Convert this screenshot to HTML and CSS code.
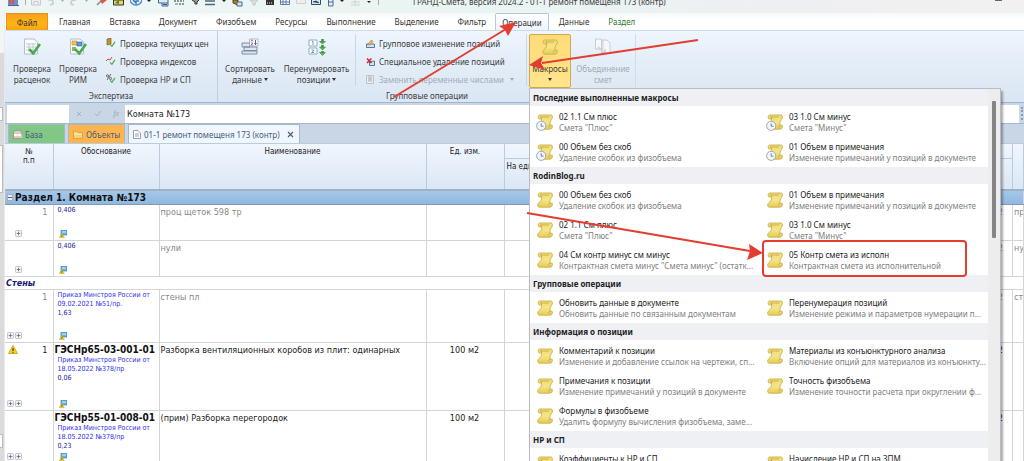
FILE: index.html
```html
<!DOCTYPE html>
<html lang="ru">
<head>
<meta charset="utf-8">
<title>ГРАНД-Смета, версия 2024.2 - 01-1 ремонт помещеня 173 (контр)</title>
<link rel="stylesheet" href="styles.css">
</head>
<body>
<svg class="defs" aria-hidden="true">
  <defs>
    <linearGradient id="gold" x1="0" y1="0" x2="0" y2="1"><stop offset="0" stop-color="#f0db74"/><stop offset=".5" stop-color="#f5e588"/><stop offset="1" stop-color="#e6cb55"/></linearGradient>
    <symbol id="scroll" viewBox="0 0 16 16">
      <path d="M2.300 1H14C15.800 1 15.800 4 14.500 5.500C13 7.500 12.600 9 13.200 11.300H15.200C15.800 13.500 14.700 15.200 12.700 15.200H2.500C.2 15.200 .2 11.800 1.600 11C4 9 5 7.500 4.600 5H2C.8 4 .8 1.500 2.300 1Z" fill="url(#gold)" stroke="#cbb04a" stroke-width=".9"/>
      <path d="M4.600 5C4.800 3.500 4.300 3 3.300 3H12M13.200 11.300C11.300 11.300 11 13.300 12.500 13.600" fill="none" stroke="#c2a440" stroke-width=".8"/>
    </symbol>
    <symbol id="scrollclock" viewBox="0 0 17 17">
      <use href="#scroll" x="1" y="0" width="16" height="16"/>
      <circle cx="5.200" cy="11.800" r="4.600" fill="#f2f6fa" stroke="#9aa8b8"/>
      <path d="M5.200 9.300V12.200H7.500" fill="none" stroke="#66788c" stroke-width=".9"/>
    </symbol>
    <symbol id="check" viewBox="0 0 10 10"><path d="M1 5.500L4 8.800L9.200 1.500" fill="none" stroke="#45ab4c" stroke-width="2"/></symbol>
    <symbol id="plus" viewBox="0 0 7 7"><rect x=".5" y=".5" width="6" height="6" rx=".8" fill="#f1f3f6" stroke="#b4bac4" stroke-width=".8"/><path d="M1.700 3.500H5.300M3.500 1.700V5.300" stroke="#667" stroke-width=".8"/></symbol>
    <symbol id="rowinfo" viewBox="0 0 8 8"><rect x="2" y=".5" width="6" height="4.500" fill="#69b5e6" stroke="#34719f" stroke-width=".6"/><path d="M3 2H7" stroke="#c9ecff"/><path d="M.2 7.700L2.800 3.300L5.400 7.700Z" fill="#f7dc2d" stroke="#a88d10" stroke-width=".4"/><path d="M2.800 4.800V7" stroke="#333" stroke-width=".7"/></symbol>
  </defs>
</svg>

<div class="desktop">
  <aside class="edge"><span class="e1"></span><span class="e2"></span><span class="e3"></span></aside>
  <div class="app">
    <header class="titlebar">
      <div class="quick">
        <svg width="11" height="6"><path d="M0 0H10V5H0Z" fill="#6e8fd0"/><path d="M2 0V4M5 0V4" stroke="#d9534a" stroke-width="2"/><path d="M0 5.500H11" stroke="#41639e"/></svg>
        <i class="bar"></i>
        <svg width="10" height="6"><path d="M.5 0V5H9.500V0M3 5V1.500H7V5" fill="#eee" stroke="#c9c9c9"/></svg>
        <svg width="18" height="6"><path d="M1 0Q7-1 6 4L3 5" fill="none" stroke="#c5c9cd" stroke-width="1.500"/><path d="M14 0h3l-1.500 2z" fill="#aaa"/></svg>
        <svg width="20" height="6"><path d="M6 0Q0 0 1 4L4 5" fill="none" stroke="#c5c9cd" stroke-width="1.500"/><path d="M15 0h3l-1.500 2z" fill="#aaa"/></svg>
        <svg width="12" height="6"><path d="M1 5L5 1" stroke="#888" stroke-width="1.500"/><path d="M4 0H11L6 4Z" fill="#dc5745"/></svg>
        <svg width="11" height="6"><path d="M.5 0V5H10.500V0Z" fill="#f5cf58" stroke="#333"/><path d="M2 3L6 0V4Z" fill="#348a4c"/></svg>
        <svg width="12" height="7"><path d="M0-1A6 6 0 0 0 12-1" fill="#e4f0fb" stroke="#4a88ca" stroke-width="1.300"/><path d="M3 0L6 3V1H9" fill="none" stroke="#3979c1" stroke-width="1.500"/></svg>
        <svg width="5" height="6"><path d="M0 0h4l-2 2z" fill="#222"/></svg>
        <svg width="11" height="7"><path d="M.5 0V3H10V0M4 3V6H10V3" fill="#dbe8f6" stroke="#46678d"/><path d="M5 4.500H9" stroke="#2557a1"/></svg>
        <svg width="11" height="6"><path d="M0 1H10M5 4H10" stroke="#333" stroke-dasharray="2 1"/><path d="M1 4H4" stroke="#357bc0"/></svg>
        <svg width="9" height="6"><path d="M1 0L4 2V4H6V2L8 0" fill="#999" stroke="#333"/></svg>
        <svg width="11" height="6"><path d="M0 1H10M0 4.500H10" stroke="#50657d" stroke-width="1.500"/></svg>
        <svg width="5" height="6"><path d="M0 0h4l-2 2z" fill="#222"/></svg>
        <svg width="11" height="7"><path d="M1 0H6V5L1 3Z" fill="#a7802c" stroke="#54451f"/><path d="M5 2H10V6H5Z" fill="#d9e8f5" stroke="#45648a"/></svg>
        <svg width="11" height="6"><path d="M1 0H9L6 3V5H4V3Z" fill="#e0e2e4" stroke="#c0c3c7"/></svg>
        <svg width="9" height="6"><path d="M0 0H8V5H0Z" fill="#333"/><path d="M1 3H7" stroke="#eee" stroke-dasharray="1 1"/></svg>
        <svg width="10" height="6"><path d="M.5 0V4.500H9.500V0M3 0V4M6 0V4M1 2H9" fill="#f5fbff" stroke="#5c7ba2"/></svg>
        <svg width="10" height="6"><path d="M.5 0V3.500H9.500V0" fill="#eee" stroke="#cbd0d4"/></svg>
        <svg width="11" height="6"><path d="M.5 0V4.500H9.500V0" fill="#d8e6f5" stroke="#314b73"/><path d="M2 2L5 1L8 3" stroke="#314b73"/></svg>
        <svg width="7" height="7"><path d="M.5 0V6H5V0M1 2H5" fill="#e4eefa" stroke="#4b6c9b"/></svg>
        <svg width="5" height="6"><path d="M0 0h4l-2 2z" fill="#222"/></svg>
        <svg width="11" height="6"><path d="M0 2H9M0 5H9M4 0V5" fill="none" stroke="#cbd0d4"/></svg>
        <svg width="5" height="6"><path d="M0 1h4l-2 2z" fill="#222"/></svg>
        <i class="bar"></i>
      </div>
      <span class="caption">ГРАНД-Смета, версия 2024.2 - 01-1 ремонт помещеня 173 (контр)</span>
      <span class="min"></span>
    </header>

    <nav class="tabs">
      <button class="file">Файл</button>
      <button>Главная</button><button>Вставка</button><button>Документ</button><button>Физобъем</button><button>Ресурсы</button><button>Выполнение</button><button>Выделение</button><button>Фильтр</button><button class="on">Операции</button><button>Данные</button><button class="ctx">Раздел</button>
    </nav>

    <section class="ribbon">
      <div class="group g1">
        <div class="tools">
          <button class="big"><svg width="18" height="18" viewBox="0 0 18 18"><path d="M1.500 1H11L14.500 4V16H1.500Z" fill="#fafcff" stroke="#b6bec8"/><path d="M3 6H13M3 9H13M3 12H13M6 5V14M10 5V14" stroke="#c3cad3"/><use href="#check" x="5" y="4" width="13" height="13"/></svg>Проверка<br>расценок</button>
          <button class="big"><svg width="18" height="18" viewBox="0 0 18 18"><path d="M1.500 1H11L14.500 4V16H1.500Z" fill="#fafcff" stroke="#b6bec8"/><path d="M3 3H8V7H3Z" fill="#f2c848" stroke="#b58d20" stroke-width=".6"/><path d="M8 4H13V8H8Z" fill="#5c9bdd" stroke="#2c63a4" stroke-width=".6"/><path d="M3 9H7V13H3Z" fill="#84bd55"/><use href="#check" x="5" y="4" width="13" height="13"/></svg>Проверка<br>РИМ</button>
          <div class="stack">
            <button class="small"><svg width="10" height="10"><path d="M1 1L5 0V6L1 7Z" fill="#c5952b" stroke="#6d4d12" stroke-width=".6"/><use href="#check" x="3" y="3" width="7" height="6"/></svg>Проверка текущих цен</button>
            <button class="small"><svg width="10" height="10"><path d="M0 5L2 3L4 4L6 1" fill="none" stroke="#cc4540"/><use href="#check" x="3" y="3" width="7" height="6"/></svg>Проверка индексов</button>
            <button class="small"><svg width="10" height="10"><circle cx="1.500" cy="1.800" r="1.100" fill="none" stroke="#333" stroke-width=".7"/><circle cx="4.500" cy="4.500" r="1.100" fill="none" stroke="#333" stroke-width=".7"/><path d="M1 6L5 0" stroke="#333" stroke-width=".7"/><use href="#check" x="3" y="3" width="7" height="6"/></svg>Проверка НР и СП</button>
          </div>
        </div>
        <span class="glabel">Экспертиза</span>
      </div>
      <div class="group g2">
        <div class="tools">
          <button class="big sort"><svg width="18" height="18" viewBox="0 0 18 18"><path d="M1 5H9V9H1ZM1 13H16V16H1ZM3 9H16V12.500H3Z" fill="#dbe6f3" stroke="#76859a" stroke-width=".9"/><path d="M8.500 1H17V8H8.500Z" fill="#fff" stroke="#94a0b0" stroke-width=".7"/><path d="M10 3.500L11 1.700L12 3.500M10 5H12L10 7H12" fill="none" stroke="#bb3333" stroke-width=".7"/><path d="M14.500 2V6.500M13.300 5.300L14.500 6.700L15.700 5.300" fill="none" stroke="#2559aa" stroke-width=".9"/></svg>Сортировать<br>данные<b class="dd"></b></button>
          <button class="big"><svg width="18" height="18" viewBox="0 0 18 18"><path d="M1 2H9V8H1ZM1 10H9V16H1Z" fill="#fff" stroke="#8fb0be"/><path d="M4 3.500H5V7M3.500 12H5.500V13L3.500 14.500H6" fill="none" stroke="#398c94" stroke-width=".8"/><path d="M14.500 1V5M14.500 7V11M14.500 13V16" stroke="#3a9641" stroke-width="2.500"/><path d="M11.500 3.500H17.500L14.500 6ZM11.500 9H17.500L14.500 12ZM11.500 14.500H17.500L14.500 17.500Z" fill="#60b84f" stroke="#2c7732" stroke-width=".5"/></svg>Перенумеровать<br>позиции<b class="dd"></b></button>
          <i class="sep"></i>
          <div class="stack wide">
            <button class="small"><svg width="9" height="9"><path d="M.5 5V8.500H8.500V5Z" fill="#d3e2f5" stroke="#5577a6"/><path d="M1.500 5.500L5.500 1L7 2.500L3.500 6Z" fill="#f3c645" stroke="#8d6c24" stroke-width=".6"/></svg>Групповое изменение позиций</button>
            <button class="small"><svg width="9" height="9"><path d="M3.500 5V8.500H8.500V4Z" fill="#d3e2f5" stroke="#5577a6"/><path d="M1 1.500L5.500 6M5.500 1.500L1 6" stroke="#cf2830" stroke-width="1.600"/></svg>Специальное удаление позиций</button>
            <button class="small" disabled><svg width="9" height="9"><path d="M.5 .5H7.500V8.500H.5Z" fill="#eee" stroke="#bbc1c8"/><path d="M2 3H6M2 5H6M3 1V7M5 1V7" stroke="#b6bcc3"/></svg>Заменить переменные числами<b class="dd far"></b></button>
          </div>
          <i class="sep"></i>
          <div class="macro">
            <button class="big open" aria-expanded="true"><svg width="18" height="18"><use href="#scroll" x="1" y="1" width="16" height="16"/></svg>Макросы<br><b class="dd mid"></b></button>
            <div class="popup" role="menu">
              <div class="lists">
                <h3>Последние выполненные макросы</h3>
                <div class="items recent">
                  <button><svg><use href="#scrollclock"/></svg><span>02 1.1 См плюс<small>Смета "Плюс"</small></span></button>
                  <button><svg><use href="#scrollclock"/></svg><span>03 1.0 См минус<small>Смета "Минус"</small></span></button>
                  <button><svg><use href="#scrollclock"/></svg><span>00 Объем без скоб<small>Удаление скобок из физобъема</small></span></button>
                  <button><svg><use href="#scrollclock"/></svg><span>01 Объем в примечания<small>Изменение примечаний у позиций в документе</small></span></button>
                </div>
                <h3>RodinBlog.ru</h3>
                <div class="items">
                  <button><svg><use href="#scroll"/></svg><span>00 Объем без скоб<small>Удаление скобок из физобъема</small></span></button>
                  <button><svg><use href="#scroll"/></svg><span>01 Объем в примечания<small>Изменение примечаний у позиций в документе</small></span></button>
                  <button><svg><use href="#scroll"/></svg><span>02 1.1 См плюс<small>Смета "Плюс"</small></span></button>
                  <button><svg><use href="#scroll"/></svg><span>03 1.0 См минус<small>Смета "Минус"</small></span></button>
                  <button><svg><use href="#scroll"/></svg><span>04 См контр минус см минус<small>Контрактная смета минус "Смета минус" (остатк...</small></span></button>
                  <button><svg><use href="#scroll"/></svg><span>05 Контр смета из исполн<small>Контрактная смета из исполнительной</small></span></button>
                </div>
                <h3>Групповые операции</h3>
                <div class="items">
                  <button><svg><use href="#scroll"/></svg><span>Обновить данные в документе<small>Обновить данные по связанным документам</small></span></button>
                  <button><svg><use href="#scroll"/></svg><span>Перенумерация позиций<small>Изменение режима и параметров нумерации п...</small></span></button>
                </div>
                <h3>Информация о позиции</h3>
                <div class="items">
                  <button><svg><use href="#scroll"/></svg><span>Комментарий к позиции<small>Изменение и добавление ссылок на чертежи, сп...</small></span></button>
                  <button><svg><use href="#scroll"/></svg><span>Материалы из конъюнктурного анализа<small>Включение опций для материалов из конъюнкту...</small></span></button>
                  <button><svg><use href="#scroll"/></svg><span>Примечания к позиции<small>Изменение примечаний у позиций в документе</small></span></button>
                  <button><svg><use href="#scroll"/></svg><span>Точность физобъема<small>Изменение точности расчета при округлении ф...</small></span></button>
                  <button><svg><use href="#scroll"/></svg><span>Формулы в физобъеме<small>Удалить формулу вычисления физобъема, заме...</small></span></button>
                </div>
                <h3>НР и СП</h3>
                <div class="items">
                  <button><svg><use href="#scroll"/></svg><span>Коэффициенты к НР и СП</span></button>
                  <button><svg><use href="#scroll"/></svg><span>Начисление НР и СП на ЗПМ</span></button>
                </div>
              </div>
              <div class="scroll"><i></i></div>
            </div>
          </div>
          <button class="big merge" disabled><svg width="18" height="18" viewBox="0 0 18 18"><path d="M1.500 1H7L9 3V11H1.500ZM7.500 2H13L16 5V15H7.500Z" fill="#f5f7f9" stroke="#c8cdd4"/><path d="M4 9L11 15M11 11V15H7" fill="none" stroke="#cbd0d6" stroke-width="1.500"/></svg>Объединение<br>смет</button>
        </div>
        <span class="glabel">Групповые операции</span>
      </div>
    </section>

    <div class="formula">
      <input class="addr" aria-label="Ячейка">
      <div class="fx">
        <svg width="6" height="6"><path d="M1 1L5 5M5 1L1 5" stroke="#a9b3bf"/></svg>
        <svg width="8" height="7"><path d="M1 4L3 6L7 1" fill="none" stroke="#a9b3bf"/></svg>
        <em>fx</em>
      </div>
      <input class="value" aria-label="Строка формул" value="Комната №173">
      <i class="grip"></i>
    </div>

    <nav class="docs">
      <button class="base"><svg width="9" height="9"><path d="M1 1H8L9 5V8.500H.5V5Z" fill="#fff" stroke="#8c8c93" stroke-width=".8"/><path d="M1 3H8M1 7H8" stroke="#e28b6c"/></svg>База</button>
      <button class="obj"><svg width="10" height="9"><path d="M.5 1H4L5 2.500H9.500V8.500H.5Z" fill="#f6d37c" stroke="#d99c35" stroke-width=".8"/><path d="M1 4H9" stroke="#fff1bc"/></svg>Объекты</button>
      <button class="doc"><svg width="8" height="9"><path d="M.5 .5H5L7.500 3V8.500H.5Z" fill="#fff" stroke="#97a0ab"/><path d="M2 4H6M2 6H6" stroke="#9aa4b0"/></svg>01-1 ремонт помещеня 173 (контр)<svg class="x" width="7" height="7"><path d="M1 1L6 6M6 1L1 6" stroke="#4c607c" stroke-width="1.200"/></svg></button>
    </nav>

    <table class="sheet">
      <colgroup><col class="c1"><col class="c2"><col class="c3"><col class="c4"><col><col class="c6"></colgroup>
      <thead>
        <tr class="h1"><th rowspan="2">№<br>п.п</th><th rowspan="2">Обоснование</th><th rowspan="2">Наименование</th><th rowspan="2">Ед. изм.</th><th></th><th rowspan="2"></th></tr>
        <tr class="h2"><th class="unit">На единицу</th></tr>
      </thead>
      <tbody>
        <tr class="section"><td colspan="6"><span><i class="minus"></i>Раздел 1. Комната №173</span></td></tr>
        <tr class="dim"><td><div class="cell s"><p class="n">1</p><p class="pl one"><svg><use href="#plus"/></svg></p></div></td><td><div class="cell s"><p class="q">0,406</p><svg class="ri"><use href="#rowinfo"/></svg></div></td><td>проц щеток 598 тр</td><td></td><td class="r">2</td><td>проц</td></tr>
        <tr class="dim"><td><div class="cell s"><p class="n"></p><p class="pl one"><svg><use href="#plus"/></svg></p></div></td><td><div class="cell s"><p class="q">0,406</p><svg class="ri"><use href="#rowinfo"/></svg></div></td><td>нули</td><td></td><td class="r">2</td><td>нули</td></tr>
        <tr class="sub"><td colspan="6">Стены</td></tr>
        <tr class="dim"><td><div class="cell m"><p class="n">1</p><p class="pl"><svg><use href="#plus"/></svg><svg><use href="#plus"/></svg></p></div></td><td><div class="cell m"><p class="q"><a href="#">Приказ Минстроя России от<br>09.02.2021 №51/пр.</a><br>1,63</p><svg class="ri"><use href="#rowinfo"/></svg></div></td><td>стены пл</td><td></td><td class="r">2</td><td>стены</td></tr>
        <tr><td><div class="cell l"><p class="n"><svg class="warn" width="10" height="9"><path d="M5 .5L9.500 8.500H.5Z" fill="#fbd21f" stroke="#c79a10" stroke-width=".8"/><path d="M5 3V6M5 6.800V7.800" stroke="#222"/></svg>1</p><p class="pl"><svg><use href="#plus"/></svg><svg><use href="#plus"/></svg></p></div></td><td><div class="cell l"><div><p class="code">ГЭСНр65-03-001-01</p><p class="q"><a href="#">Приказ Минстроя России от<br>18.05.2022 №378/пр</a><br>0,06</p></div><svg class="ri"><use href="#rowinfo"/></svg></div></td><td>Разборка вентиляционных коробов из плит: одинарных</td><td class="c">100 м2</td><td class="r">2</td><td></td></tr>
        <tr><td><div class="cell m"><p class="n"></p><p class="pl"><svg><use href="#plus"/></svg><svg><use href="#plus"/></svg></p></div></td><td><div class="cell m"><div><p class="code">ГЭСНр55-01-008-01</p><p class="q"><a href="#">Приказ Минстроя России от<br>18.05.2022 №378/пр</a><br>0,23</p></div><svg class="ri"><use href="#rowinfo"/></svg></div></td><td>(прим) Разборка перегородок</td><td class="c">100 м2</td><td class="r">2</td><td></td></tr>
      </tbody>
    </table>
  </div>

  <svg class="notes" width="1024" height="461" viewBox="0 0 1024 461" aria-hidden="true">
    <g stroke="#e43c30" stroke-width="2" fill="none"><path d="M394 97L506 29"/><path d="M698 40L542 63"/><path d="M527 213L750 251"/></g>
    <g fill="#e43c30"><path d="M516 22L508 36L505 30L499 26Z"/><path d="M529 65L543 56L541 63L545 70Z"/><path d="M763 253L747 260L750 251L749 244Z"/></g>
    <rect x="763" y="241" width="203" height="35" rx="3" fill="none" stroke="#e43c30" stroke-width="2"/>
  </svg>
</div>
</body>
</html>
```
FILE: styles.css
```css
* { box-sizing: border-box; }
body { margin: 0; height: 100vh; overflow: hidden; font: 8px/11px "Noto Sans", "Open Sans", sans-serif; color: #3c3c3c; background: #fff; }
button, input { font: inherit; color: inherit; border: 0; padding: 0; margin: 0; background: none; }
p, h3 { margin: 0; }
svg { display: block; flex: none; }
.defs { position: absolute; width: 0; height: 0; }
.desktop { position: relative; display: flex; height: 100%; overflow: hidden; }
.edge { width: 5px; flex: none; background: #dadada; border-right: 1px solid #e8e8e8; display: flex; flex-direction: column; border-top: 53px solid #f3f4f4; padding-top: 54px; }
.edge span { width: 3px; background: #fff; border: 1px solid #bbb; border-left: 0; flex: none; }
.e1 { height: 14px; }
.e2 { height: 48px; margin-top: 24px; }
.e3 { height: 14px; margin-top: 241px; }
.app { flex: 1; min-width: 0; background: #c9d6e6; }

.titlebar { height: 13px; display: flex; align-items: flex-start; background: linear-gradient(90deg, #edf6f5, #e9f5f2 50%, #eeeff3 75%, #f2f1f0); }
.quick { display: flex; justify-content: space-between; padding-left: 3px; width: 374px; overflow: hidden; }
.bar { width: 1px; height: 5px; background: #aaa; flex: none; }
.caption { padding-left: 34px; line-height: 11px; margin-top: -4px; white-space: nowrap; }
.min { width: 7px; height: 1px; background: #666; margin-left: auto; margin-right: 22px; }

.tabs { display: flex; height: 17px; background: linear-gradient(#f6f9f9, #fff 6px); padding-left: 1px; color: #333; }
.tabs button { padding: 0 9px 0 10px; }
.tabs .file { width: 42px; padding: 0; margin-right: 1px; background: linear-gradient(#f9a01b, #fdb515 60%, #f9a50d); border: 1px solid #e0921d; border-bottom: 0; }
.tabs .on { border: 1px solid #b7c8dc; border-bottom: 0; padding: 0 6px; background: linear-gradient(#fff, #eef5fd); border-radius: 2px 2px 0 0; }
.tabs .ctx { color: #2b7a2b; }

.ribbon { display: flex; height: 73px; background: linear-gradient(#eef5fd, #e5eef8 40%, #dae6f3); border-top: 1px solid #cfdbe8; border-bottom: 1px solid #9fb4cd; }
.group { display: flex; flex-direction: column; border-right: 1px solid #c1cedd; }
.g1 { width: 213px; }
.g2 { width: 418px; border: 0; }
.tools { display: flex; height: 59px; padding: 3px 0 0 4px; }
.glabel { text-align: center; line-height: 12px; }
.big { width: 46px; line-height: 11px; white-space: nowrap; text-align: center; height: 54px; }
.big svg { margin: 0 auto 7px; }
.g2 .tools { padding-left: 2px; }
.g2 .big { width: 73px; }
.g2 .sort { width: 60px; }
.stack { display: flex; flex-direction: column; padding-left: 5px; }
.small { display: flex; align-items: center; gap: 4px; height: 18px; white-space: nowrap; }
.stack.wide { width: 166px; padding-left: 8px; }
button:disabled { color: #a3abb5; }
.dd { display: inline-block; border: 2px solid transparent; border-top: 3px solid #333; border-bottom: 0; margin-left: 2px; vertical-align: 2px; }
.dd.mid { margin: 0; }
.dd.far { margin-left: 2px; border-top-color: #a3abb5; }
.sep { width: 1px; background: #c9d6e5; height: 52px; margin: 0 2px; flex: none; }
.macro { position: relative; }
.g2 .open { width: 42px; height: 54px; background: linear-gradient(#fedb77, #ffe58c); border: 1px solid #d2a84a; border-radius: 2px; }
.g2 .merge { width: 65px; border-right: 1px solid #d2dde9; }

.popup { position: absolute; z-index: 2; top: 54px; left: 0; width: 472px; display: flex; background: #fff; border: 1px solid #b9bdc3; box-shadow: 2px 3px 2px #0005; }
.lists { flex: 1; min-width: 0; }
.popup h3 { height: 17px; padding-left: 3px; font-size: 8px; line-height: 17px; color: #222; background: #eff0f4; }
.items { display: grid; grid-template-columns: 230px 1fr; padding: 0 0 1px 7px; }
.items button { display: flex; gap: 6px; height: 30px; align-items: flex-start; text-align: left; padding-top: 5px; white-space: nowrap; color: #222; }
.items svg { width: 16px; height: 16px; margin-top: 3px; }
.recent svg { width: 17px; height: 17px; margin-left: -1px; }
.items small { display: block; font-size: 8px; color: #808080; }
.scroll { width: 12px; background: #ededed; padding: 12px 4px 0; }
.scroll i { display: block; width: 4px; height: 137px; background: #858585; border-radius: 1px; }

.formula { display: flex; align-items: center; height: 21px; padding: 2px 1px 1px 2px; border-bottom: 1px solid #a9b6c6; color: #222; }
.formula input { background: #fff; height: 18px; }
.addr { width: 62px; }
.fx { width: 56px; display: flex; justify-content: space-between; align-items: center; padding: 0 6px 0 7px; color: #9aa5b2; }
.fx em { font: italic 8px/9px "Liberation Serif", serif; }
.formula .value { flex: 1; min-width: 0; padding-left: 2px; font: 9px/12px "DejaVu Sans Condensed", "DejaVu Sans", sans-serif; }
.grip { width: 2px; height: 13px; margin-left: 2px; border-left: 2px dotted #8c9bb0; }

.docs { display: flex; height: 19px; gap: 3px; padding-left: 3px; color: #455e7c; }
.docs button { display: flex; align-items: center; gap: 3px; border: 1px solid #a8b8c9; border-bottom: 0; padding: 0 5px 0 4px; white-space: nowrap; }
.docs .base { width: 57px; background: #82c785; }
.docs .obj { width: 57px; background: #ffb54e; }
.docs .doc { background: #f0f6fd; width: 172px; }
.docs .x { margin-left: auto; }

.sheet { width: 100%; border-collapse: collapse; table-layout: fixed; background: #fff; font: 9px/12px "DejaVu Sans Condensed", "DejaVu Sans", sans-serif; color: #222; }
.c1 { width: 48px; } .c2 { width: 106px; } .c3 { width: 267px; } .c4 { width: 78px; } .c6 { width: 11px; }
.sheet th { font-weight: 400; font-size: 8px; line-height: 9px; vertical-align: top; border: 1px solid #b9cbdf; border-left: 0; border-bottom: 2px solid #9fb1c6; padding: 3px 2px 0; }
.sheet thead { background: linear-gradient(#f0f6fd, #dbe7f4); }
.sheet .h1 th:nth-child(5) { border-bottom: 1px solid #b9cbdf; }
.h1 { height: 15px; } .h2 { height: 31px; }
.sheet .unit { text-align: left; white-space: nowrap; }
.sheet td { padding: 1px 2px 0 1px; border: 1px solid #d5d5d5; border-left: 0; vertical-align: top; overflow: hidden; white-space: nowrap; }
.sheet .dim { color: #888; }
.sheet .section td { height: 14px; padding: 0 0 0 2px; background: linear-gradient(#a6c8e8, #8fb8e0); border-bottom-color: #8499b0; font-weight: 700; color: #111; font-size: 10px; line-height: 13px; }
.section span { display: flex; align-items: center; gap: 2px; }
.minus { width: 6px; height: 7px; background: linear-gradient(#567, #567) center / 4px 1px no-repeat #e9eef5; border: 1px solid #aab; }
.sheet .sub td { height: 13px; padding: 0 1px; line-height: 12px; font-weight: 700; font-style: italic; color: #191970; font-size: 9px; }
.cell { display: flex; flex-direction: column; justify-content: space-between; align-items: flex-start; }
.s { height: 34px; } .m { height: 51px; } .l { height: 66px; }
.n { width: 100%; text-align: right; padding-right: 3px; display: flex; justify-content: flex-end; min-height: 12px; }
.warn { margin: 1px auto 0 2px; }
.pl { display: flex; gap: 1px; padding: 0 0 3px 1px; }
.pl svg { width: 7px; height: 7px; }
.one { padding-left: 9px; }
.q { font-size: 7px; line-height: 9px; color: #1c1c9c; padding-left: 3px; }
.q a { color: #2f2ff0; text-decoration: none; }
.code { font-weight: 700; font-size: 10px; line-height: 12px; color: #111; }
.ri { width: 8px; height: 8px; margin: 0 0 2px 4px; }
.sheet .c { text-align: center; }
.sheet .r { text-align: right; padding-right: 9px; }

.notes { position: absolute; left: 0; top: 0; z-index: 3; pointer-events: none; }
```
